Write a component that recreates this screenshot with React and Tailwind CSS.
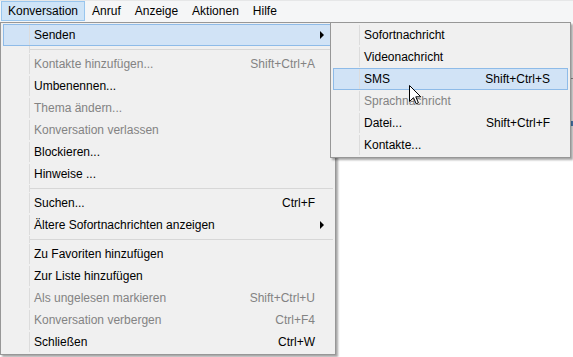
import React from 'react';

const mainItems = [
  { label: 'Senden', arrow: true, active: true },
  { sep: true },
  { label: 'Kontakte hinzufügen...', shortcut: 'Shift+Ctrl+A', disabled: true },
  { label: 'Umbenennen...' },
  { label: 'Thema ändern...', disabled: true },
  { label: 'Konversation verlassen', disabled: true },
  { label: 'Blockieren...' },
  { label: 'Hinweise ...' },
  { sep: true },
  { label: 'Suchen...', shortcut: 'Ctrl+F' },
  { label: 'Ältere Sofortnachrichten anzeigen', arrow: true },
  { sep: true },
  { label: 'Zu Favoriten hinzufügen' },
  { label: 'Zur Liste hinzufügen' },
  { label: 'Als ungelesen markieren', shortcut: 'Shift+Ctrl+U', disabled: true },
  { label: 'Konversation verbergen', shortcut: 'Ctrl+F4', disabled: true },
  { label: 'Schließen', shortcut: 'Ctrl+W' },
];

const subItems = [
  { label: 'Sofortnachricht' },
  { label: 'Videonachricht' },
  { label: 'SMS', shortcut: 'Shift+Ctrl+S', active: true },
  { label: 'Sprachnachricht', disabled: true },
  { label: 'Datei...', shortcut: 'Shift+Ctrl+F' },
  { label: 'Kontakte...' },
];

const menuBar = ['Konversation', 'Anruf', 'Anzeige', 'Aktionen', 'Hilfe'];

function MenuRow({ item, gutter }) {
  if (item.sep) {
    return (
      <div className="flex h-[7px]">
        <div className={`${gutter} shrink-0 border-r border-[#dcdcdc]`} />
        <div className="flex-1 flex items-center">
          <div className="h-px w-full bg-[#d7d7d7]" />
        </div>
      </div>
    );
  }
  return (
    <div
      className={`flex h-[22px] border ${
        item.active ? 'border-[#8ebbe8] bg-[#d1e3f6]' : 'border-transparent'
      } ${item.disabled ? 'text-[#838383]' : 'text-black'}`}
    >
      <div className={`${item.active ? 'w-[26px]' : 'w-[26px]'} shrink-0 border-r border-[#dcdcdc]`} />
      <div className="flex-1 pl-[4px] flex items-center whitespace-nowrap">{item.label}</div>
      {item.shortcut && <div className="flex items-center whitespace-nowrap">{item.shortcut}</div>}
      <div className="w-[17px] shrink-0 flex items-center">
        {item.arrow && (
          <div className="ml-[5px] w-0 h-0 border-l-[4px] border-l-black border-y-[4px] border-y-transparent" />
        )}
      </div>
    </div>
  );
}

function Cursor() {
  return (
    <svg width="13" height="20" viewBox="0 0 13 20" className="absolute left-[409px] top-[85px]">
      <path
        d="M0.5 0.5 L0.5 16.5 L4.5 12.7 L7.2 18.8 L9.4 17.8 L6.8 11.8 L11.8 11.8 Z"
        fill="#fff"
        stroke="#000"
        strokeWidth="1"
        strokeLinejoin="miter"
      />
    </svg>
  );
}

export default function App() {
  return (
    <div
      className="relative w-[573px] h-[357px] bg-white overflow-hidden text-[12px] leading-none"
      style={{ fontFamily: '"Liberation Sans", Arial, sans-serif' }}
    >
      {/* Menu bar */}
      <div className="h-[22px] bg-[#f5f6f7] border-t border-[#e6e7e8] flex items-stretch pb-[1px]">
        {menuBar.map((m, i) => (
          <div
            key={m}
            className={`flex items-center px-[6px] border ${
              i === 0 ? 'border-[#99c6ee] bg-[#cfe4f7] ml-[1px]' : 'border-transparent'
            }`}
          >
            {m}
          </div>
        ))}
      </div>

      {/* bits of the window behind, at the right edge */}
      <div className="absolute left-[571px] top-[78px] w-[2px] h-px bg-[#9a9a9a]" />
      <div className="absolute left-[571px] top-[121px] w-[2px] h-[5px] bg-[#4f86c4]" />

      {/* Konversation menu */}
      <div className="absolute left-0 top-[22px] w-[336px] bg-[#f0f0f0] border border-[#979797] px-[2px] py-[1px] shadow-[2px_2px_2px_rgba(0,0,0,0.35)]">
        {mainItems.map((item, i) => (
          <MenuRow key={i} item={item} gutter="w-[27px]" />
        ))}
      </div>

      {/* Senden submenu */}
      <div className="absolute left-[330px] top-[22px] w-[241px] bg-[#f0f0f0] border border-[#979797] px-[2px] py-[1px] shadow-[2px_2px_2px_rgba(0,0,0,0.35)]">
        {subItems.map((item, i) => (
          <MenuRow key={i} item={item} gutter="w-[27px]" />
        ))}
      </div>

      <Cursor />
    </div>
  );
}
